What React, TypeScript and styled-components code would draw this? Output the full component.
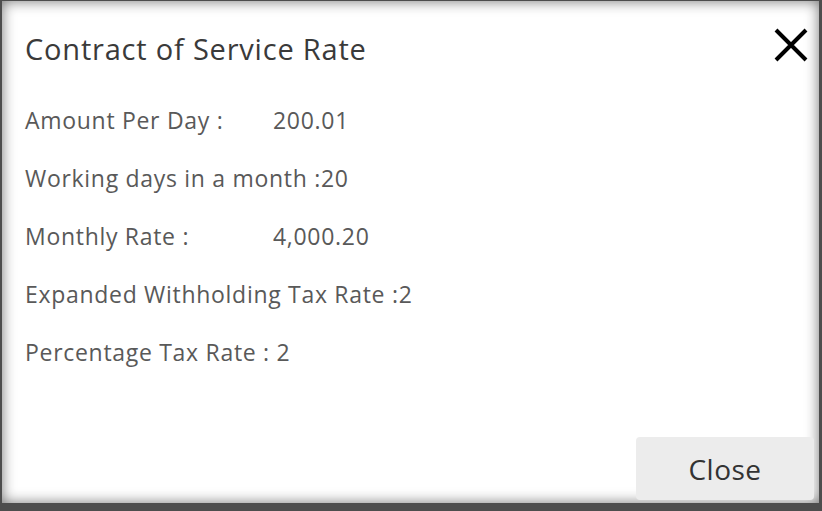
import React from "react";
import styled, { createGlobalStyle } from "styled-components";

const Global = createGlobalStyle`
  html, body { margin: 0; padding: 0; background: #4d4d4d; }
  body { font-family: "Open Sans", "Noto Sans", sans-serif; }
`;

const Backdrop = styled.div`
  width: 822px;
  height: 511px;
  box-sizing: border-box;
  padding: 1px 3px 8px 2px;
  display: flex;
  background: #4d4d4d;
`;

const Dialog = styled.div`
  flex: 1;
  background: #fff;
  box-shadow: inset 0 0 14px rgba(0, 0, 0, 0.55);
  display: flex;
  flex-direction: column;
  padding: 22px 5px 3px 23px;
  box-sizing: border-box;
`;

const Header = styled.div`
  display: flex;
  align-items: flex-start;
  justify-content: space-between;
  height: 68px;
`;

const Title = styled.h2`
  margin: 0;
  font-size: 29px;
  line-height: 52px;
  font-weight: 400;
  letter-spacing: 0.8px;
  color: #3a3a3a;
`;

const CloseIcon = styled.button`
  border: 0;
  background: none;
  padding: 0;
  margin: 5px 6px 0 0;
  width: 34px;
  height: 34px;
  display: flex;
  align-items: center;
  justify-content: center;
  cursor: pointer;
`;

const Body = styled.div`
  display: flex;
  flex-direction: column;
  flex: 1;
`;

const Row = styled.div`
  display: flex;
  align-items: baseline;
  height: 58px;
  line-height: 58px;
  font-size: 23px;
  letter-spacing: 0.7px;
  color: #595959;
  white-space: pre;
`;

const Label = styled.span<{ $w?: number }>`
  ${(p) => (p.$w ? `width: ${p.$w}px;` : "")}
`;

const Footer = styled.div`
  display: flex;
  justify-content: flex-end;
`;

const CloseButton = styled.button`
  width: 178px;
  height: 63px;
  border: 0;
  border-radius: 4px;
  background: #ececec;
  color: #333;
  font-family: inherit;
  font-size: 28px;
  letter-spacing: 0.5px;
  cursor: pointer;
`;

const rows: { label: string; value: string; w?: number }[] = [
  { label: "Amount Per Day :", value: "200.01", w: 248 },
  { label: "Working days in a month :", value: "20" },
  { label: "Monthly Rate :", value: "4,000.20", w: 248 },
  { label: "Expanded Withholding Tax Rate :", value: "2" },
  { label: "Percentage Tax Rate : ", value: "2" },
];

export default function App() {
  return (
    <>
      <Global />
      <Backdrop>
        <Dialog>
          <Header>
            <Title>Contract of Service Rate</Title>
            <CloseIcon aria-label="close">
              <svg width="34" height="34" viewBox="0 0 34 34">
                <path d="M2 2 L32 32 M32 2 L2 32" stroke="#000" strokeWidth="4" />
              </svg>
            </CloseIcon>
          </Header>
          <Body>
            {rows.map((r) => (
              <Row key={r.label}>
                <Label $w={r.w}>{r.label}</Label>
                <span>{r.value}</span>
              </Row>
            ))}
          </Body>
          <Footer>
            <CloseButton>Close</CloseButton>
          </Footer>
        </Dialog>
      </Backdrop>
    </>
  );
}
